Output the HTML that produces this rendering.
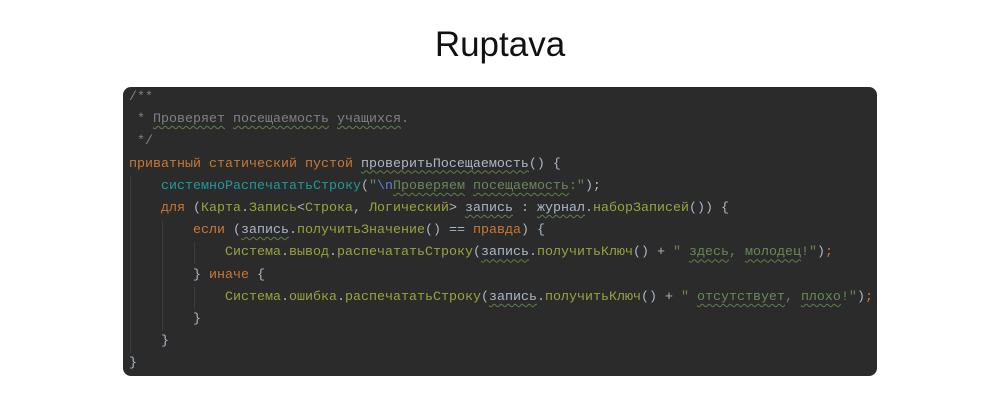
<!DOCTYPE html>
<html><head><meta charset="utf-8"><style>
body{margin:0;width:1000px;height:400px;background:#fff;overflow:hidden}
h1{position:absolute;left:0;width:1000px;top:20px;margin:0;text-align:center;font:400 35px "Liberation Sans","DejaVu Sans",sans-serif;color:#111;line-height:50px}
.box{position:absolute;left:123px;top:87px;width:754px;height:289px;background:#2b2b2b;border-radius:8px;overflow:hidden}
pre{margin:0;padding:0 0 0 6px;font:13.33px/22.2px "Liberation Mono","DejaVu Sans Mono",monospace;color:#a9b7c6;white-space:pre}
.c{color:#808080}.k{color:#cc7832}.t{color:#20999d}.s{color:#6a8759}.m{color:#9aa33d}.e{color:#5c7de0}
.w{text-decoration:underline wavy #5f7f4a;text-decoration-thickness:1px;text-underline-offset:3px}
.g{position:absolute;width:1px;background:#3a3a3a}
</style></head><body>
<h1>Ruptava</h1>
<div class="box">
<div class="g" style="left:7px;top:88px;height:178px"></div>
<div class="g" style="left:39px;top:133px;height:111px"></div>
<div class="g" style="left:71px;top:155px;height:22px"></div>
<div class="g" style="left:71px;top:200px;height:22px"></div>
<pre><span class="c">/**
 * <span class="w">Проверяет</span> <span class="w">посещаемость</span> <span class="w">учащихся</span>.
 */</span>
<span class="k">приватный статический пустой</span> <span class="w">проверитьПосещаемость</span>() {
    <span class="t">системноРаспечататьСтроку</span>(<span class="s">"<span class="e">\n</span><span class="w">Проверяем</span> <span class="w">посещаемость</span>:"</span>);
    <span class="k">для</span> (<span class="m">Карта</span>.<span class="m">Запись</span>&lt;<span class="m">Строка</span>, <span class="m">Логический</span>&gt; <span class="w">запись</span> : <span class="w">журнал</span>.<span class="m">наборЗаписей</span>()) {
        <span class="k">если</span> (<span class="w">запись</span>.<span class="m">получитьЗначение</span>() == <span class="k">правда</span>) {
            <span class="m">Система</span>.<span class="m">вывод</span>.<span class="m">распечататьСтроку</span>(<span class="w">запись</span>.<span class="m">получитьКлюч</span>() + <span class="s">" <span class="w">здесь</span>, <span class="w">молодец</span>!"</span>)<span class="k">;</span>
        } <span class="k">иначе</span> {
            <span class="m">Система</span>.<span class="m">ошибка</span>.<span class="m">распечататьСтроку</span>(<span class="w">запись</span>.<span class="m">получитьКлюч</span>() + <span class="s">" <span class="w">отсутствует</span>, <span class="w">плохо</span>!"</span>)<span class="k">;</span>
        }
    }
}</pre>
</div>
</body></html>
